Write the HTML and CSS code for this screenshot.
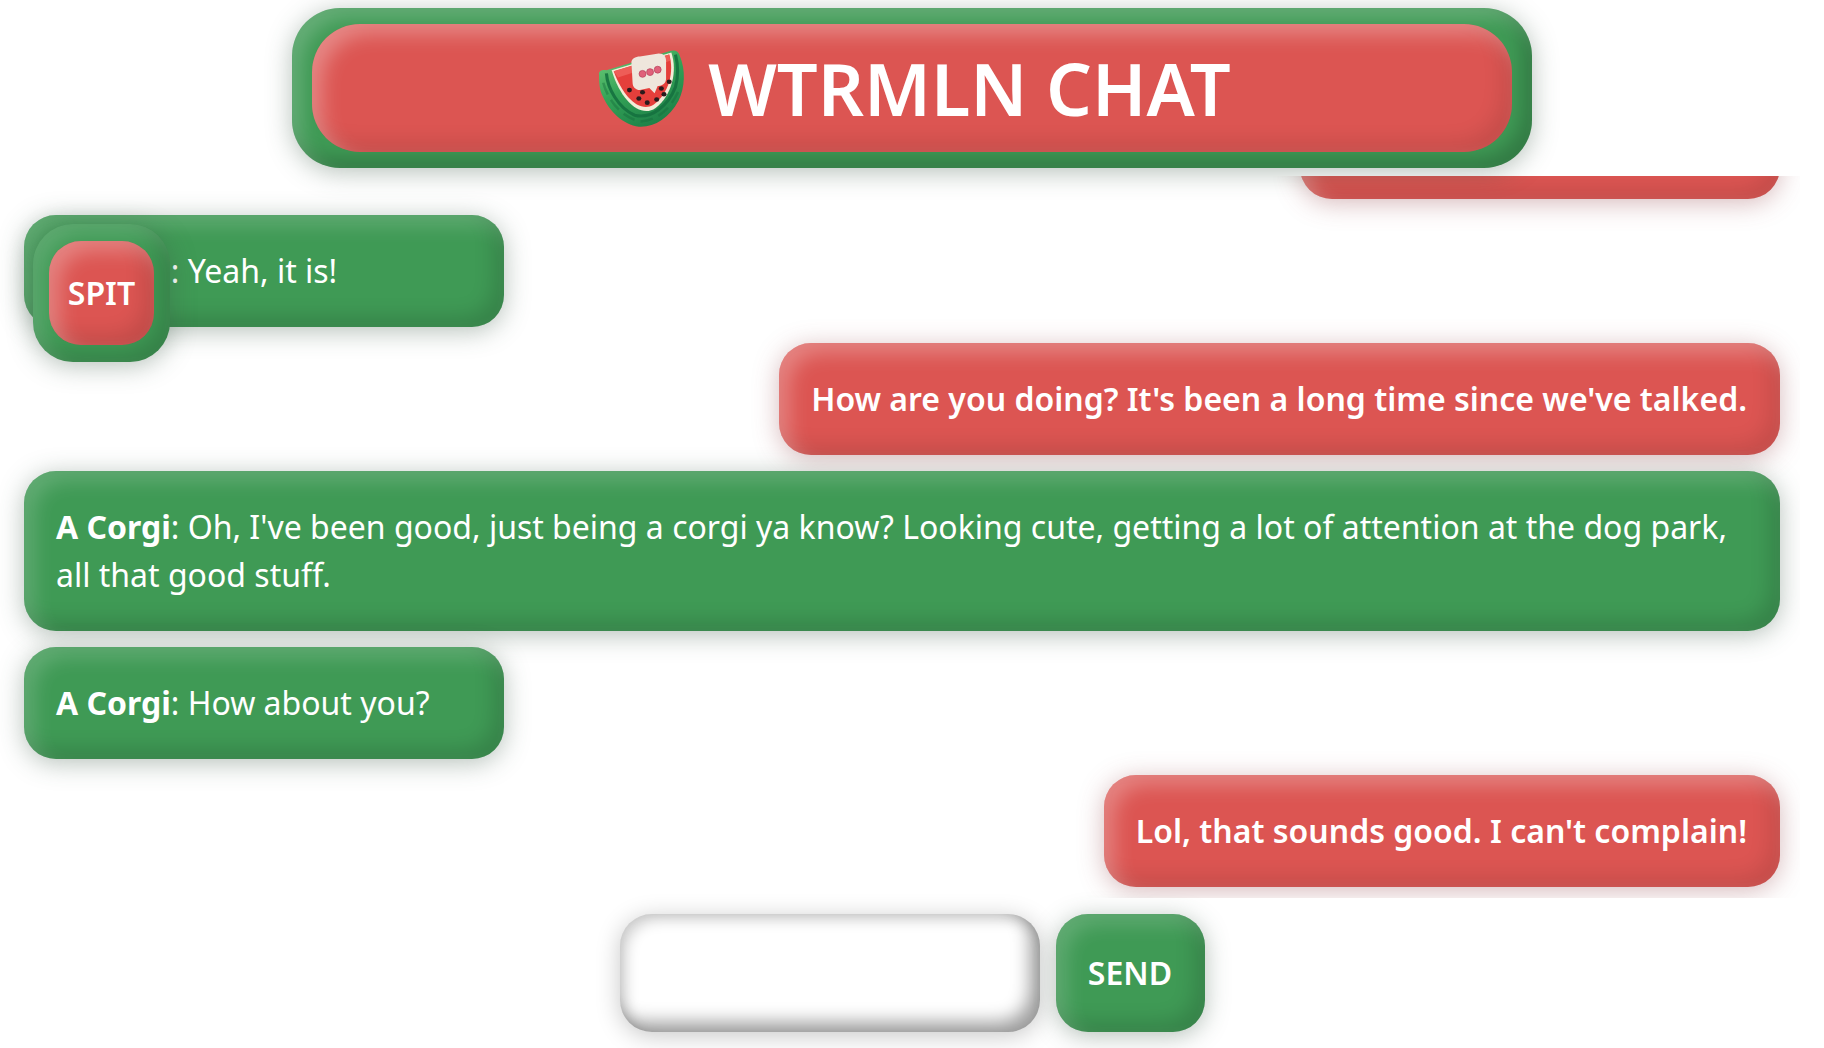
FILE: index.html
```html
<!DOCTYPE html>
<html lang="en">
<head>
<meta charset="utf-8">
<title>WTRMLN CHAT</title>
<link rel="stylesheet" href="styles.css">
</head>
<body>
<header class="banner">
  <div class="banner-inner">
    <svg class="logo" viewBox="10 8 86 78" width="90" height="82" aria-hidden="true">
      <defs>
        <linearGradient id="rind" x1="0" y1="0" x2="0.6" y2="1">
          <stop offset="0" stop-color="#74cf7c"/>
          <stop offset="0.5" stop-color="#35a457"/>
          <stop offset="1" stop-color="#1e8148"/>
        </linearGradient>
      </defs>
      <path d="M12 34C11 31 15 29 19 30L79 12C84 10 88 12 89 16C95 30 94 47 88 59C79 76 64 85 50 84C35 82 22 70 15 54C12 47 12 40 12 34Z" fill="url(#rind)"/>
      <path d="M16 42C20 57 31 73 50 79C66 79 81 68 89 47" fill="none" stroke="#14683a" stroke-width="2.4" stroke-dasharray="12 6" opacity=".4"/>
      <path d="M19 33C20 47 30 66 46 73C62 77 78 64 85 46C88 35 87 23 85 15" fill="none" stroke="#15713f" stroke-width="3" opacity=".9"/>
      <path d="M24 30L81 13C87 30 82 54 66 66C52 76 33 60 24 30Z" fill="#f3ecd8"/>
      <path d="M26 31L79 15C84 31 79 52 64 63C51 71 35 56 26 31Z" fill="#e53f3b"/>
      <path d="M26 31L79 15L80 21L30 37Z" fill="#ee5d57"/>
      <path d="M43 24C42 19 47 17 51 17L69 14C74 14 76 17 76 21L76 38C76 42 73 45 69 45L68 45L65 52L60 47L51 49C47 49 44 46 44 42Z" fill="#efe6dc"/>
      <g fill="#e0607a" stroke="#b8405a" stroke-width=".7">
        <circle cx="53.5" cy="33.5" r="3.3"/>
        <circle cx="60.7" cy="31.8" r="3.3"/>
        <circle cx="68" cy="29.5" r="3.3"/>
      </g>
      <g fill="#2a1a1c">
        <ellipse cx="41" cy="49" rx="2.4" ry="2.2"/>
        <ellipse cx="53.5" cy="51" rx="2.4" ry="2.2"/>
        <ellipse cx="50" cy="57" rx="2.4" ry="2.2"/>
        <ellipse cx="58" cy="61" rx="2.4" ry="2.2"/>
        <ellipse cx="67" cy="58" rx="2.4" ry="2.2"/>
        <ellipse cx="74" cy="53" rx="2.4" ry="2.2"/>
        <ellipse cx="71.5" cy="47.5" rx="2.4" ry="2.2"/>
        <ellipse cx="79" cy="41" rx="2.4" ry="2.2"/>
      </g>
    </svg>
    <h1 class="title">WTRMLN CHAT</h1>
  </div>
</header>
<main class="chat">
  <div class="bubble mine"></div>
  <div class="bubble theirs">
    <b class="name">A Corgi</b>: Yeah, it is!
    <button class="spit" type="button"><span class="spit-inner">SPIT</span></button>
  </div>
  <div class="bubble mine">How are you doing? It's been a long time since we've talked.</div>
  <div class="bubble theirs"><b class="name">A Corgi</b>: Oh, I've been good, just being a corgi ya know? Looking cute, getting a lot of attention at the dog park, all that good stuff.</div>
  <div class="bubble theirs"><b class="name">A Corgi</b>: How about you?</div>
  <div class="bubble mine">Lol, that sounds good. I can't complain!</div>
</main>
<form class="composer">
  <input class="field" type="text" aria-label="Message">
  <button class="send" type="button">SEND</button>
</form>
</body>
</html>
```
FILE: styles.css
```css
* { box-sizing: border-box; }
html, body { height: 100%; }
body {
  margin: 0;
  height: 100vh;
  overflow: hidden;
  background: #fff;
  color: #fff;
  font-family: "Noto Sans", sans-serif;
  font-size: 32px;
  line-height: 48px;
  display: flex;
  flex-direction: column;
  align-items: center;
  padding: 8px 0 16px;
}
.banner {
  position: relative;
  z-index: 2;
  flex: none;
  width: 1240px;
  height: 160px;
  padding: 16px 20px;
  background: #3f9a55;
  border-radius: 48px;
  box-shadow:
    inset 10px 10px 18px rgba(255,255,255,.2),
    inset -10px -10px 18px rgba(0,0,0,.2),
    0 4px 26px rgba(60,90,70,.38);
}
.banner-inner {
  height: 128px;
  padding-left: 4px;
  display: flex;
  align-items: center;
  justify-content: center;
  gap: 21px;
  background: #dc5552;
  border-radius: 48px;
  box-shadow:
    inset 10px 10px 20px rgba(255,255,255,.3),
    inset -10px -10px 20px rgba(0,0,0,.1);
}
.logo { flex: none; }
.title {
  margin: 0;
  font-size: 72px;
  line-height: 96px;
  font-weight: 600;
  color: #fff;
}
.chat {
  flex: 1;
  min-height: 0;
  width: 1800px;
  align-self: flex-start;
  margin-top: 8px;
  margin-bottom: 16px;
  padding: 0 20px 11px 24px;
  overflow: hidden;
  display: flex;
  flex-direction: column;
  justify-content: flex-end;
  gap: 16px;
}
.bubble {
  position: relative;
  flex: none;
  min-width: 480px;
  min-height: 112px;
  padding: 32px;
  border-radius: 32px;
}
.theirs {
  align-self: flex-start;
  background: #3f9a55;
  box-shadow:
    inset 10px 10px 20px rgba(255,255,255,.18),
    inset -10px -10px 20px rgba(0,0,0,.15),
    0 4px 26px rgba(60,90,70,.38);
}
.mine {
  align-self: flex-end;
  padding-right: 33px;
  background: #dc5552;
  font-weight: 600;
  box-shadow:
    inset 10px 10px 20px rgba(255,255,255,.28),
    inset -10px -10px 20px rgba(0,0,0,.1),
    0 4px 26px rgba(150,70,75,.38);
}
.name { font-weight: 700; }
.spit {
  position: absolute;
  left: 9px;
  top: 9px;
  width: 137px;
  height: 138px;
  padding: 17px 16px;
  border: 0;
  border-radius: 40px;
  background: #3f9a55;
  box-shadow:
    inset 10px 10px 20px rgba(255,255,255,.16),
    inset -10px -10px 20px rgba(0,0,0,.16),
    0 4px 26px rgba(60,90,70,.38);
  font: inherit;
  color: #fff;
}
.spit-inner {
  display: flex;
  align-items: center;
  justify-content: center;
  height: 104px;
  border-radius: 32px;
  background: #dc5552;
  font-size: 32px;
  font-weight: 600;
  box-shadow:
    inset 10px 10px 20px rgba(255,255,255,.28),
    inset -10px -10px 20px rgba(0,0,0,.12);
}
.composer {
  flex: none;
  display: flex;
  gap: 16px;
  height: 118px;
}
.field {
  width: 420px;
  height: 100%;
  border: 0;
  outline: 0;
  border-radius: 32px;
  background: #fff;
  font: inherit;
  box-shadow:
    inset -10px -10px 18px rgba(0,0,0,.38),
    inset 6px 6px 14px rgba(0,0,0,.18),
    0 4px 24px rgba(0,0,0,.22);
}
.send {
  width: 149px;
  height: 100%;
  padding: 0;
  border: 0;
  border-radius: 32px;
  background: #3f9a55;
  color: #fff;
  font: inherit;
  font-weight: 600;
  box-shadow:
    inset 10px 10px 20px rgba(255,255,255,.18),
    inset -10px -10px 20px rgba(0,0,0,.15),
    0 4px 24px rgba(60,90,70,.38);
}
```
